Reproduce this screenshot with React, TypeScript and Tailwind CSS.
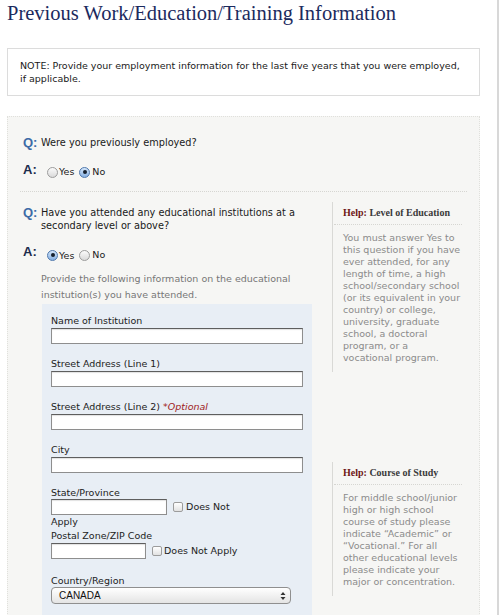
import React from "react";

const Radio = ({ checked }: { checked?: boolean }) => (
  <span
    className={`inline-flex items-center justify-center w-[11px] h-[11px] rounded-full border shrink-0 ${
      checked
        ? "border-[#4f78ad] bg-linear-to-b from-[#d4e6fa] to-[#86b0e2]"
        : "border-[#9c9c9c] bg-linear-to-b from-[#fbfbfb] to-[#dadada]"
    }`}
  >
    {checked && <span className="w-[4px] h-[4px] rounded-full bg-[#15202e]" />}
  </span>
);

const Checkbox = () => (
  <span className="inline-block align-middle w-[10px] h-[10px] rounded-[2px] border border-[#9c9c9c] bg-linear-to-b from-white to-[#e2e2e2]" />
);

const TextInput = ({ w }: { w: string }) => (
  <div
    className={`${w} h-[16px] bg-white border border-[#8e8e8e] border-t-[#5e5e5e] shadow-[inset_0_1px_1px_rgba(0,0,0,0.12)]`}
  />
);

const Field = ({ label, optional }: { label: string; optional?: boolean }) => (
  <div className="mb-[14px]">
    <div className="h-[12px] leading-[12px] text-[9.5px] text-[#222]">
      {label}
      {optional && <span className="italic text-[#a01c1c]"> *Optional</span>}
    </div>
    <div className="mt-[1px]">
      <TextInput w="w-[252px]" />
    </div>
  </div>
);

// help text is broken line by line, as the original wraps it
const Help = ({ topic, lines }: { topic: string; lines: string[] }) => (
  <div className="border-l border-[#d9d9d6] pl-[10px] pb-[8px]">
    <div className="font-['Liberation_Serif',serif] font-bold text-[10px] leading-[22px] text-[#3a3a3a]">
      <span className="text-[#6e1616]">Help:</span> {topic}
    </div>
    <div className="-ml-[9px] mr-[5px] border-t border-dotted border-[#d6d6d2]" />
    <div className="pt-[7px] text-[9.5px] leading-[12px] text-[#8b8b8b] whitespace-nowrap">
      {lines.map((l) => (
        <div key={l}>{l}</div>
      ))}
    </div>
  </div>
);

export default function App() {
  return (
    <div className="w-[500px] h-[615px] overflow-hidden bg-white flex font-['DejaVu_Sans',Verdana,sans-serif]">
      <div className="w-[499px] h-full border-r-2 border-[#d8d8d8] shrink-0">
        <div className="ml-[7px] w-[473px]">
          <h1 className="font-['Liberation_Serif',serif] text-[20.5px] leading-[26px] text-[#1b2a5e]">
            Previous Work/Education/Training Information
          </h1>

          <div className="mt-[22px] h-[48px] border border-[#dcdcdc] pl-[12px] pt-[10px] text-[9.5px] leading-[13px] text-[#1a1a1a]">
            NOTE: Provide your employment information for the last five years that you were employed,
            <br />
            if applicable.
          </div>

          <div className="mt-[20px] h-[520px] bg-[#f6f6f4] border border-dotted border-[#e0e0dc]">
            <div className="pl-[15px] pt-[19px]">
              <div className="flex items-center h-[14px]">
                <span className="w-[18px] font-['Liberation_Sans',Arial,sans-serif] font-bold text-[13px] text-[#3d6ba6]">Q:</span>
                <span className="text-[9.75px] text-[#1a1a1a]">Were you previously employed?</span>
              </div>
              <div className="flex items-center h-[14px] mt-[15px]">
                <span className="w-[24px] font-['Liberation_Sans',Arial,sans-serif] font-bold text-[13px] text-[#1d2c4c] -mt-[5px]">A:</span>
                <Radio />
                <span className="text-[9.5px] ml-[1px] mr-[5px] text-[#1a1a1a]">Yes</span>
                <Radio checked />
                <span className="text-[9.5px] ml-[2px] text-[#1a1a1a]">No</span>
              </div>
            </div>

            <div className="ml-[12px] w-[447px] mt-[12px] border-t border-dotted border-[#d6d6d2]" />

            <div className="flex">
              <div className="w-[312px] shrink-0 pl-[15px] pt-[14px]">
                <div className="flex items-start">
                  <span className="w-[18px] shrink-0 font-['Liberation_Sans',Arial,sans-serif] font-bold text-[13px] leading-[13px] text-[#3d6ba6]">Q:</span>
                  <span className="w-[262px] text-[9.75px] leading-[13px] text-[#1a1a1a]">
                    Have you attended any educational institutions at a secondary level or above?
                  </span>
                </div>
                <div className="flex items-center h-[14px] mt-[16px]">
                  <span className="w-[24px] font-['Liberation_Sans',Arial,sans-serif] font-bold text-[13px] text-[#1d2c4c] -mt-[6px]">A:</span>
                  <Radio checked />
                  <span className="text-[9.5px] ml-[1px] mr-[5px] mt-[3px] text-[#1a1a1a]">Yes</span>
                  <Radio />
                  <span className="text-[9.5px] ml-[2px] text-[#1a1a1a]">No</span>
                </div>
                <div className="ml-[18px] mt-[9px] text-[9.5px] leading-[16px] text-[#777]">
                  Provide the following information on the educational
                  <br />
                  institution(s) you have attended.
                </div>
                <div className="ml-[19px] mt-[1px] w-[270px] h-[320px] bg-[#e8eef5] pl-[9px] pt-[11px]">
                  <Field label="Name of Institution" />
                  <Field label="Street Address (Line 1)" />
                  <Field label="Street Address (Line 2)" optional />
                  <Field label="City" />

                  <div className="h-[12px] leading-[12px] text-[9.5px] text-[#222]">State/Province</div>
                  <div className="w-[200px] text-[9.5px] leading-[14px] text-[#222]">
                    <span className="inline-block align-middle">
                      <TextInput w="w-[116px]" />
                    </span>{" "}
                    <span className="ml-[3px]">
                      <Checkbox />
                    </span>{" "}
                    Does Not Apply
                  </div>
                  <div className="mt-[1px] h-[12px] leading-[12px] text-[9.5px] text-[#222]">Postal Zone/ZIP Code</div>
                  <div className="flex items-center mt-[1px] text-[9.5px] text-[#222]">
                    <TextInput w="w-[95px]" />
                    <span className="ml-[6px] mr-[2px]">
                      <Checkbox />
                    </span>
                    Does Not Apply
                  </div>

                  <div className="mt-[16px] h-[12px] leading-[12px] text-[9.5px] text-[#222]">Country/Region</div>
                  <div className="w-[240px] h-[17px] rounded-[4px] border border-[#8f8f8f] bg-linear-to-b from-white to-[#e4e4e4] flex items-center justify-between pl-[7px] pr-[4px] font-['Liberation_Sans',Arial,sans-serif] text-[10px] text-[#111]">
                    <span>CANADA</span>
                    <svg width="6" height="10" viewBox="0 0 6 10">
                      <path d="M0.5 4 L3 1 L5.5 4 Z M0.5 6 L3 9 L5.5 6 Z" fill="#333" />
                    </svg>
                  </div>
                </div>
              </div>

              <div className="ml-[12px] w-[135px] pt-[10px]">
                <Help
                  topic="Level of Education"
                  lines={[
                    "You must answer Yes to",
                    "this question if you have",
                    "ever attended, for any",
                    "length of time, a high",
                    "school/secondary school",
                    "(or its equivalent in your",
                    "country) or college,",
                    "university, graduate",
                    "school, a doctoral",
                    "program, or a",
                    "vocational program.",
                  ]}
                />
                <div className="mt-[90px]">
                  <Help
                    topic="Course of Study"
                    lines={[
                      "For middle school/junior",
                      "high or high school",
                      "course of study please",
                      "indicate “Academic” or",
                      "“Vocational.” For all",
                      "other educational levels",
                      "please indicate your",
                      "major or concentration.",
                    ]}
                  />
                </div>
              </div>
            </div>
          </div>
        </div>
      </div>
    </div>
  );
}
